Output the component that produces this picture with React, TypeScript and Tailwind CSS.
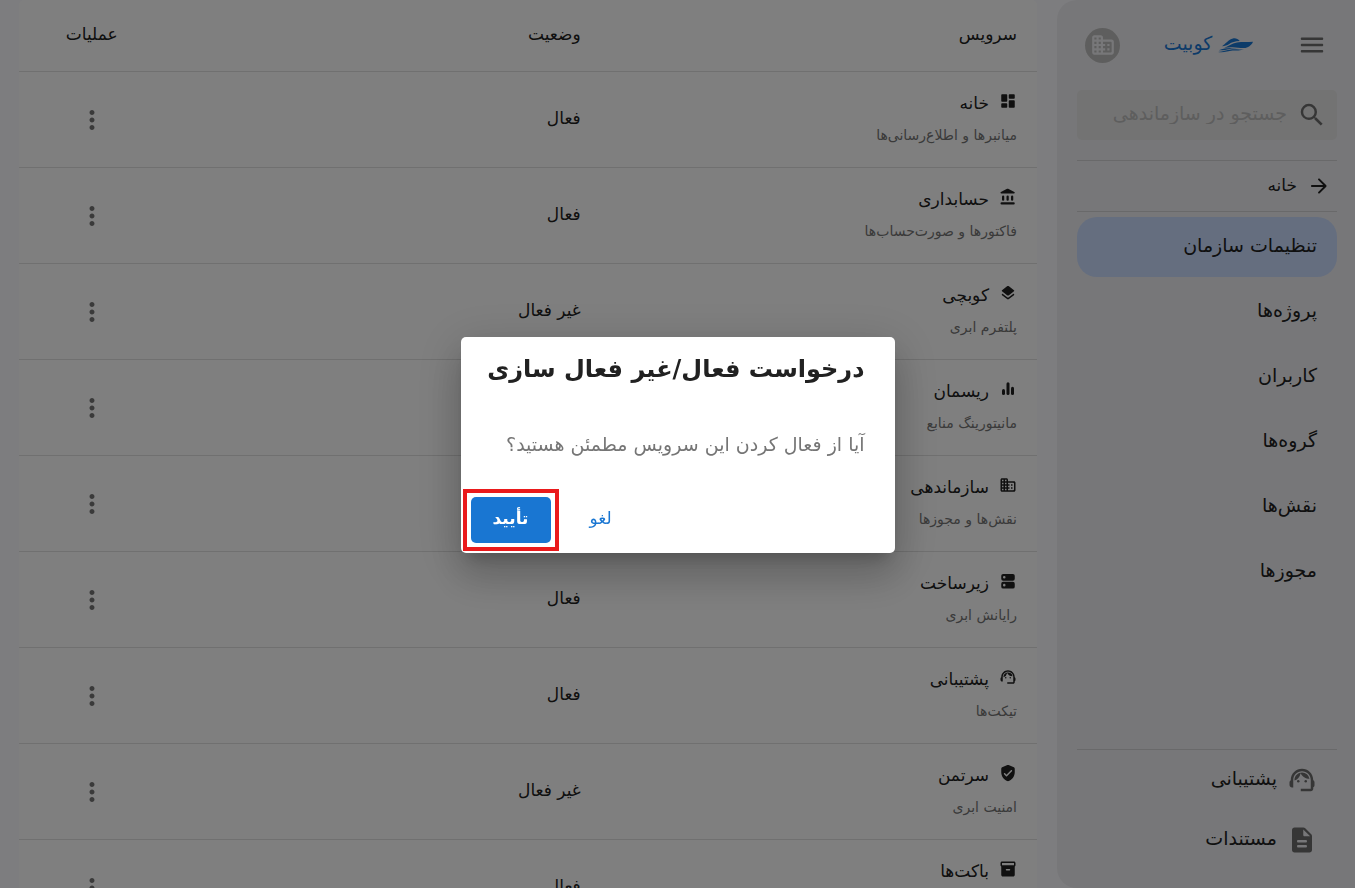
import type { ReactNode } from "react";
import { MdMoreVert, MdSearch, MdSupportAgent } from "react-icons/md";

function Glyph({ size, children }: { size: number; children: ReactNode }) {
  return (
    <svg
      width={size}
      height={size}
      viewBox="0 0 24 24"
      fill="currentColor"
      fillRule="evenodd"
      aria-hidden="true"
      className="shrink-0"
    >
      {children}
    </svg>
  );
}

function MenuIcon() {
  return (
    <Glyph size={30}>
      <path d="M4 18h16c.55 0 1-.45 1-1s-.45-1-1-1H4c-.55 0-1 .45-1 1s.45 1 1 1zm0-5h16c.55 0 1-.45 1-1s-.45-1-1-1H4c-.55 0-1 .45-1 1s.45 1 1 1zM3 7c0 .55.45 1 1 1h16c.55 0 1-.45 1-1s-.45-1-1-1H4c-.55 0-1 .45-1 1z" />
    </Glyph>
  );
}

function ArrowIcon() {
  return (
    <Glyph size={24}>
      <path d="M5 13h11.17l-4.88 4.88c-.39.39-.39 1.03 0 1.42.39.39 1.02.39 1.41 0l6.59-6.59c.39-.39.39-1.02 0-1.41l-6.58-6.6c-.39-.39-1.02-.39-1.41 0-.39.39-.39 1.02 0 1.41L16.17 11H5c-.55 0-1 .45-1 1s.45 1 1 1z" />
    </Glyph>
  );
}

function DocumentIcon() {
  return (
    <Glyph size={30}>
      <path d="M14.59 2.59c-.38-.38-.89-.59-1.42-.59H6c-1.1 0-2 .9-2 2v16c0 1.1.89 2 1.99 2H18c1.1 0 2-.9 2-2V8.83c0-.53-.21-1.04-.59-1.41l-4.82-4.83zM15 18H9c-.55 0-1-.45-1-1s.45-1 1-1h6c.55 0 1 .45 1 1s-.45 1-1 1zm0-4H9c-.55 0-1-.45-1-1s.45-1 1-1h6c.55 0 1 .45 1 1s-.45 1-1 1zm-2-6V3.5L18.5 9H14c-.55 0-1-.45-1-1z" />
    </Glyph>
  );
}

function DashboardIcon() {
  return (
    <Glyph size={18}>
      <path d="M4 13h6c.55 0 1-.45 1-1V4c0-.55-.45-1-1-1H4c-.55 0-1 .45-1 1v8c0 .55.45 1 1 1zm0 8h6c.55 0 1-.45 1-1v-4c0-.55-.45-1-1-1H4c-.55 0-1 .45-1 1v4c0 .55.45 1 1 1zm10 0h6c.55 0 1-.45 1-1v-8c0-.55-.45-1-1-1h-6c-.55 0-1 .45-1 1v8c0 .55.45 1 1 1zM13 4v4c0 .55.45 1 1 1h6c.55 0 1-.45 1-1V4c0-.55-.45-1-1-1h-6c-.55 0-1 .45-1 1z" />
    </Glyph>
  );
}

function BankIcon() {
  return (
    <Glyph size={18}>
      <rect x="4" y="10" width="3" height="7" rx="1.5" />
      <rect x="10" y="10" width="3" height="7" rx="1.5" />
      <rect x="16" y="10" width="3" height="7" rx="1.5" />
      <rect x="2" y="19" width="19" height="3" rx="1.5" />
      <path d="M10.1 1.39L2.57 5.35c-.35.19-.57.55-.57.95C2 6.9 2.49 7.4 3.1 7.4h16.81c.6 0 1.09-.5 1.09-1.1 0-.4-.22-.76-.57-.95L12.9 1.39c-.87-.46-1.93-.46-2.8 0z" />
    </Glyph>
  );
}

function LayersIcon() {
  return (
    <Glyph size={18}>
      <path d="M12.6 18.06c-.36.28-.87.28-1.23 0l-6.15-4.78c-.36-.28-.86-.28-1.22 0-.51.4-.51 1.17 0 1.57l6.76 5.26c.72.56 1.73.56 2.46 0l6.76-5.26c.51-.4.51-1.17 0-1.57l-.01-.01c-.36-.28-.86-.28-1.22 0l-6.15 4.79zm.63-3.02l6.76-5.26c.51-.4.51-1.18 0-1.58l-6.76-5.26c-.72-.56-1.73-.56-2.46 0L4.01 8.21c-.51.4-.51 1.18 0 1.58l6.76 5.26c.72.56 1.74.56 2.46-.01z" />
    </Glyph>
  );
}

function BarsIcon() {
  return (
    <Glyph size={18}>
      <rect x="10" y="3" width="4" height="17" rx="2" />
      <rect x="4" y="12" width="4" height="8" rx="2" />
      <rect x="16" y="9" width="4" height="11" rx="2" />
    </Glyph>
  );
}

function BuildingIcon({ size }: { size: number }) {
  return (
    <Glyph size={size}>
      <path d="M12 7V5c0-1.1-.9-2-2-2H4c-1.1 0-2 .9-2 2v14c0 1.1.9 2 2 2h16c1.1 0 2-.9 2-2V9c0-1.1-.9-2-2-2h-8zM6 19H4v-2h2v2zm0-4H4v-2h2v2zm0-4H4V9h2v2zm0-4H4V5h2v2zm4 12H8v-2h2v2zm0-4H8v-2h2v2zm0-4H8V9h2v2zm0-4H8V5h2v2zm9 12h-7v-2h2v-2h-2v-2h2v-2h-2V9h7c.55 0 1 .45 1 1v8c0 .55-.45 1-1 1zm-1-8h-2v2h2v-2zm0 4h-2v2h2v-2z" />
    </Glyph>
  );
}

function ServerIcon() {
  return (
    <Glyph size={18}>
      <path d="M18.5 2.500h-13a2.500 2.500 0 0 0-2.500 2.500v4a2.500 2.500 0 0 0 2.500 2.500h13a2.500 2.500 0 0 0 2.500-2.500v-4a2.500 2.500 0 0 0-2.500-2.500zM7 8.700a1.700 1.700 0 1 1 0-3.400 1.700 1.700 0 0 1 0 3.400z" />
      <path d="M18.500 13h-13a2.500 2.500 0 0 0-2.500 2.500v4a2.500 2.500 0 0 0 2.500 2.500h13a2.500 2.500 0 0 0 2.500-2.500v-4a2.500 2.500 0 0 0-2.500-2.500zM7 19.200a1.700 1.700 0 1 1 0-3.400 1.700 1.700 0 0 1 0 3.400z" />
    </Glyph>
  );
}

function ShieldIcon() {
  return (
    <Glyph size={18}>
      <path d="M11.19 1.36l-7 3.11C3.47 4.79 3 5.51 3 6.3V11c0 5.55 3.84 10.74 9 12 5.16-1.26 9-6.45 9-12V6.3c0-.79-.47-1.51-1.19-1.83l-7-3.11c-.51-.23-1.11-.23-1.62 0zm-1.9 14.93L6.7 13.7c-.39-.39-.39-1.02 0-1.41.39-.39 1.02-.39 1.41 0L10 14.17l5.88-5.88c.39-.39 1.02-.39 1.41 0 .39.39.39 1.02 0 1.41l-6.59 6.59c-.38.39-1.02.39-1.41 0z" />
    </Glyph>
  );
}

function BucketIcon() {
  return (
    <Glyph size={18}>
      <path d="M20 2H4c-1 0-2 .9-2 2v3.01c0 .72.43 1.34 1 1.69V20c0 1.1 1.1 2 2 2h14c.9 0 2-.9 2-2V8.7c.57-.35 1-.97 1-1.69V4c0-1.1-1-2-2-2zm-6 12h-4c-.55 0-1-.45-1-1s.45-1 1-1h4c.55 0 1 .45 1 1s-.45 1-1 1zm6-7H4V4h16v3z" />
    </Glyph>
  );
}

function BoatLogo() {
  return (
    <svg width="35" height="15" viewBox="0 0 35 15" fill="currentColor" aria-hidden="true">
      <path d="M4 8.200C7.500 6.200 10.500 1.300 15 .5c2.700-.5 5 .5 6.700 2.600-4.700.3-8 1.400-10.500 2.800C9 7.200 7 8.100 4 8.200z" />
      <path d="M6 9.600C10.500 8.800 13.500 5.400 19 4.500c5-.8 11-.3 16-.7-.8 2-2 3.300-3.600 4.500-1.700 1.200-3.400 1.700-5.400 1.800-4.500.2-8-1.300-13-.9-2.500.1-4.600.6-7 .4z" />
      <path d="M.8 12.200c4-1.500 8-2.400 12.500-2.300 2.700 0 5.200.4 7.700.9-3.500-.2-6.500-.4-9.500.1-3.800.6-6.700 1.700-10.700 1.300z" />
      <path d="M0 13.900c5-.5 8.500-2.100 13-2.500 4.500-.3 8.500.6 13-.2-3.500 1.700-7.500.9-11.500 1.300-4.700.6-9.500 2.600-14.500 1.400z" />
    </svg>
  );
}

const services = [
  { icon: <DashboardIcon />, name: "خانه", about: "میانبرها و اطلاع‌رسانی‌ها", status: "فعال" },
  { icon: <BankIcon />, name: "حسابداری", about: "فاکتورها و صورت‌حساب‌ها", status: "فعال" },
  { icon: <LayersIcon />, name: "کوبچی", about: "پلتفرم ابری", status: "غیر فعال" },
  { icon: <BarsIcon />, name: "ریسمان", about: "مانیتورینگ منابع", status: "فعال" },
  { icon: <BuildingIcon size={18} />, name: "سازماندهی", about: "نقش‌ها و مجوزها", status: "فعال" },
  { icon: <ServerIcon />, name: "زیرساخت", about: "رایانش ابری", status: "فعال" },
  { icon: <MdSupportAgent size={18} />, name: "پشتیبانی", about: "تیکت‌ها", status: "فعال" },
  { icon: <ShieldIcon />, name: "سرتمن", about: "امنیت ابری", status: "غیر فعال" },
  { icon: <BucketIcon />, name: "باکت‌ها", about: "فضای ذخیره‌سازی", status: "فعال" },
];

const links = ["تنظیمات سازمان", "پروژه‌ها", "کاربران", "گروه‌ها", "نقش‌ها", "مجوزها"];

function Sidebar() {
  return (
    <aside className="flex w-[298px] shrink-0 flex-col rounded-l-[20px] bg-[#efeff2] pb-[18px] pl-5 pr-[18px]">
      <header className="flex h-[90px] items-center justify-between pl-2 pr-[10px]">
        <button type="button" aria-label="منو" className="text-[#6d6d6d]">
          <MenuIcon />
        </button>
        <a href="#home" className="flex items-center gap-[6px] pb-1 text-[19px] text-[#1976d2]">
          <span className="pt-1">
            <BoatLogo />
          </span>
          کوبیت
        </a>
        <button
          type="button"
          aria-label="سازمان"
          className="flex size-[35px] items-center justify-center rounded-full bg-[#bdbdbd] text-[#efeff2]"
        >
          <BuildingIcon size={26} />
        </button>
      </header>
      <label className="flex h-[50px] items-center gap-[10px] rounded-[5px] bg-[#e6e6e6] pl-2 pr-[10px] text-[#6d6d6d]">
        <MdSearch size={30} className="shrink-0" />
        <input
          type="search"
          aria-label="جستجو"
          placeholder="جستجو در سازماندهی"
          className="h-10 w-full min-w-0 bg-transparent pb-1 text-[19px] outline-none placeholder:text-[#bcbcbc]"
        />
      </label>
      <a
        href="#home"
        className="mt-5 flex h-[52px] shrink-0 items-center gap-[10px] border-y border-[#d2d2d4] pr-[6px] text-[17px] text-[#212121]"
      >
        <ArrowIcon />
        خانه
      </a>
      <nav className="mt-[5px] flex flex-col gap-[5px] text-[19px] text-[#212121]">
        {links.map((link, i) => (
          <a
            key={link}
            href="#section"
            className={
              i === 0
                ? "flex h-[60px] items-center rounded-[20px] bg-[#cadcff] px-5 pb-1"
                : "flex h-[60px] items-center px-5 pb-1"
            }
          >
            {link}
          </a>
        ))}
      </nav>
      <footer className="mt-auto border-t border-[#d2d2d4] text-[19px] text-[#212121]">
        <a href="#support" className="flex h-[60px] items-center gap-[10px] px-5">
          <MdSupportAgent size={30} className="text-[#6d6d6d]" />
          <span className="pb-1">پشتیبانی</span>
        </a>
        <a href="#docs" className="flex h-[60px] items-center gap-[10px] px-5">
          <span className="text-[#6d6d6d]">
            <DocumentIcon />
          </span>
          <span className="pb-1">مستندات</span>
        </a>
      </footer>
    </aside>
  );
}

function ServiceTable() {
  return (
    <table className="w-full table-fixed rounded-[5px] bg-white text-[#212121]">
      <thead>
        <tr className="h-[71px] border-b border-[#e0e0e0] text-[17px]">
          <th className="w-3/7 px-5 pb-[2px] text-right font-medium">سرویس</th>
          <th className="w-3/7 px-5 pb-[2px] text-right font-medium">وضعیت</th>
          <th className="w-1/7 px-5 pb-[2px] text-center font-medium">عملیات</th>
        </tr>
      </thead>
      <tbody>
        {services.map((service) => (
          <tr key={service.name} className="h-24 border-b border-[#e0e0e0]">
            <td className="px-5">
              <div className="flex h-8 gap-[10px] text-[17px] leading-8">
                <span className="pt-[5px]">{service.icon}</span>
                {service.name}
              </div>
              <p className="text-[14px] leading-8 text-[#757575]">{service.about}</p>
            </td>
            <td className="px-5 text-[17px]">{service.status}</td>
            <td className="pt-[2px] text-center">
              <button type="button" aria-label="عملیات" className="align-middle text-[#757575]">
                <MdMoreVert size={30} />
              </button>
            </td>
          </tr>
        ))}
      </tbody>
    </table>
  );
}

function ConfirmDialog() {
  return (
    <div className="fixed inset-0 flex items-center justify-center bg-black/50 pt-[2px]">
      <div
        role="dialog"
        aria-modal="true"
        aria-labelledby="confirm-title"
        className="w-[434px] rounded-[5px] bg-white shadow-[0_11px_15px_-7px_rgba(0,0,0,0.2),0_24px_38px_3px_rgba(0,0,0,0.14),0_9px_46px_8px_rgba(0,0,0,0.12)]"
      >
        <h2 id="confirm-title" className="pl-5 pr-[30px] pt-[10px] text-[24px] font-bold leading-[44px] text-[#212121]">
          درخواست فعال/غیر فعال سازی
        </h2>
        <p className="px-[30px] pb-[26px] pt-9 text-[19px] leading-[34px] text-[#757575]">
          آیا از فعال کردن این سرویس مطمئن هستید؟
        </p>
        <div className="flex justify-end gap-[10px] p-[10px] text-[17px]">
          <button type="button" className="h-[46px] w-20 rounded-[5px] pb-[2px] text-[#1976d2]">
            لغو
          </button>
          <div className="relative">
            <button type="button" className="h-[46px] w-20 rounded-[5px] bg-[#1976d2] pb-[2px] font-bold text-white">
              تأیید
            </button>
            <span className="pointer-events-none absolute -inset-2 border-4 border-[#ea1a1c]" />
          </div>
        </div>
      </div>
    </div>
  );
}

export default function App() {
  return (
    <div
      dir="rtl"
      className="flex h-screen overflow-hidden bg-[#fafaff] font-['DejaVu_Sans','Noto_Sans',sans-serif]"
    >
      <Sidebar />
      <main className="min-w-0 flex-1 overflow-hidden pl-[19px] pr-5">
        <ServiceTable />
      </main>
      <ConfirmDialog />
    </div>
  );
}
